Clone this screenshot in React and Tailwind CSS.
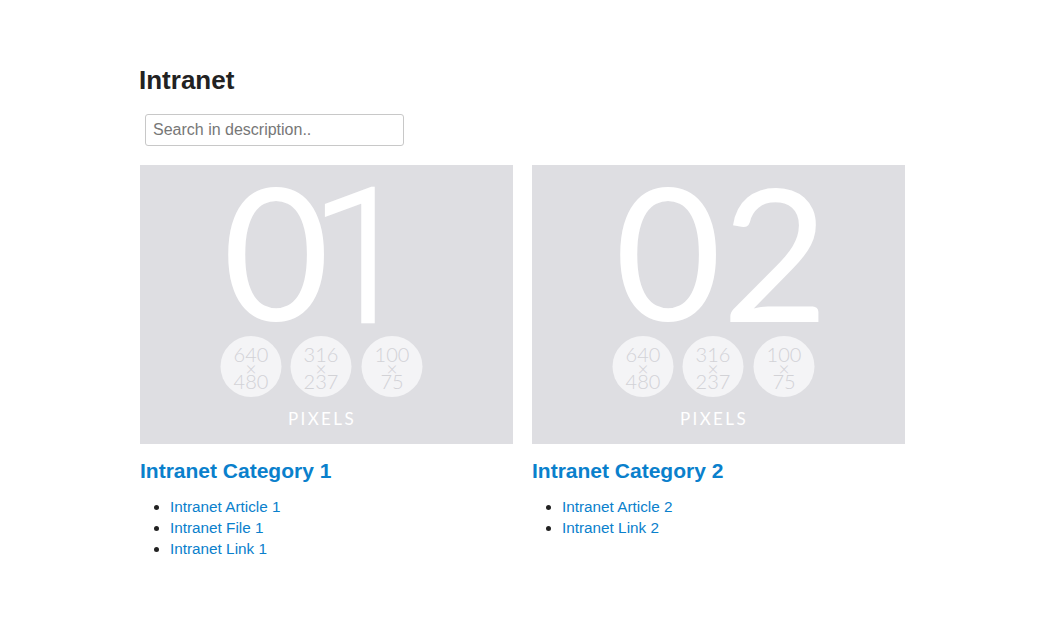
const categories = [
  {
    num: '01',
    title: 'Intranet Category 1',
    links: ['Intranet Article 1', 'Intranet File 1', 'Intranet Link 1'],
  },
  {
    num: '02',
    title: 'Intranet Category 2',
    links: ['Intranet Article 2', 'Intranet Link 2'],
  },
];

const sizes = [
  { cx: 111, top: '640', bottom: '480' },
  { cx: 181, top: '316', bottom: '237' },
  { cx: 252, top: '100', bottom: '75' },
];

// placeholder picture (640x480 / 316x237 / 100x75 pixels)
function Placeholder({ num }) {
  return (
    <svg width="373" height="279" viewBox="0 0 373 279" className="block">
      <rect width="373" height="279" fill="#dedee2" />
      <text x="136" y="156" textAnchor="middle" fontFamily="Lato, sans-serif" fontSize="184" fill="#fff">
        0
      </text>
      {num === '01' ? (
        <text
          x="222"
          y="157"
          textAnchor="middle"
          fontFamily="Roboto, sans-serif"
          fontWeight="300"
          fontSize="188"
          fill="#fff"
          stroke="#fff"
          strokeWidth="2.5"
        >
          1
        </text>
      ) : (
        <text x="243" y="157" textAnchor="middle" fontFamily="Lato, sans-serif" fontSize="184" fill="#fff">
          2
        </text>
      )}
      {sizes.map((s) => (
        <g key={s.top}>
          <circle cx={s.cx} cy="201.5" r="30.5" fill="#f4f4f6" />
          <text x={s.cx} y="197" textAnchor="middle" fontFamily="Lato, sans-serif" fontWeight="300" fontSize="20" fill="#d2d2d6">
            {s.top}
          </text>
          <text x={s.cx} y="211" textAnchor="middle" fontFamily="Lato, sans-serif" fontWeight="300" fontSize="19" fill="#d2d2d6">
            ×
          </text>
          <text x={s.cx} y="224" textAnchor="middle" fontFamily="Lato, sans-serif" fontWeight="300" fontSize="20" fill="#d2d2d6">
            {s.bottom}
          </text>
        </g>
      ))}
      <text x="182" y="260" textAnchor="middle" fontFamily="Lato, sans-serif" fontSize="17" letterSpacing="2.4" fill="#fff">
        PIXELS
      </text>
    </svg>
  );
}

export default function App() {
  return (
    <div className="min-h-screen bg-white font-['Liberation_Sans',Arial,sans-serif]">
      <div className="w-[766px] mx-auto pt-[65px]">
        <h1 className="text-[26px] leading-[30px] font-bold text-[#222] -ml-[1px]">Intranet</h1>

        <div className="mt-[19px] ml-[5px]">
          <input
            type="text"
            placeholder="Search in description.."
            className="w-[259px] h-[32px] px-[7px] border border-[#c8c8c8] rounded-[3px] text-[16px] text-[#333] placeholder:text-[#777] outline-none"
          />
        </div>

        {/* Categories */}
        <div className="mt-[19px] grid grid-cols-[373px_373px] gap-[19px]">
          {categories.map((cat) => (
            <div key={cat.num}>
              <Placeholder num={cat.num} />
              <h2 className="mt-[15px] text-[21px] leading-[24px] font-bold text-[#0a80cc]">
                {cat.title}
              </h2>
              <ul className="mt-[13px] pl-[30px] list-disc marker:text-[#222]">
                {cat.links.map((l) => (
                  <li key={l} className="text-[15.3px] leading-[21px]">
                    <a href="#" className="text-[#0a80cc]">
                      {l}
                    </a>
                  </li>
                ))}
              </ul>
            </div>
          ))}
        </div>
      </div>
    </div>
  );
}
